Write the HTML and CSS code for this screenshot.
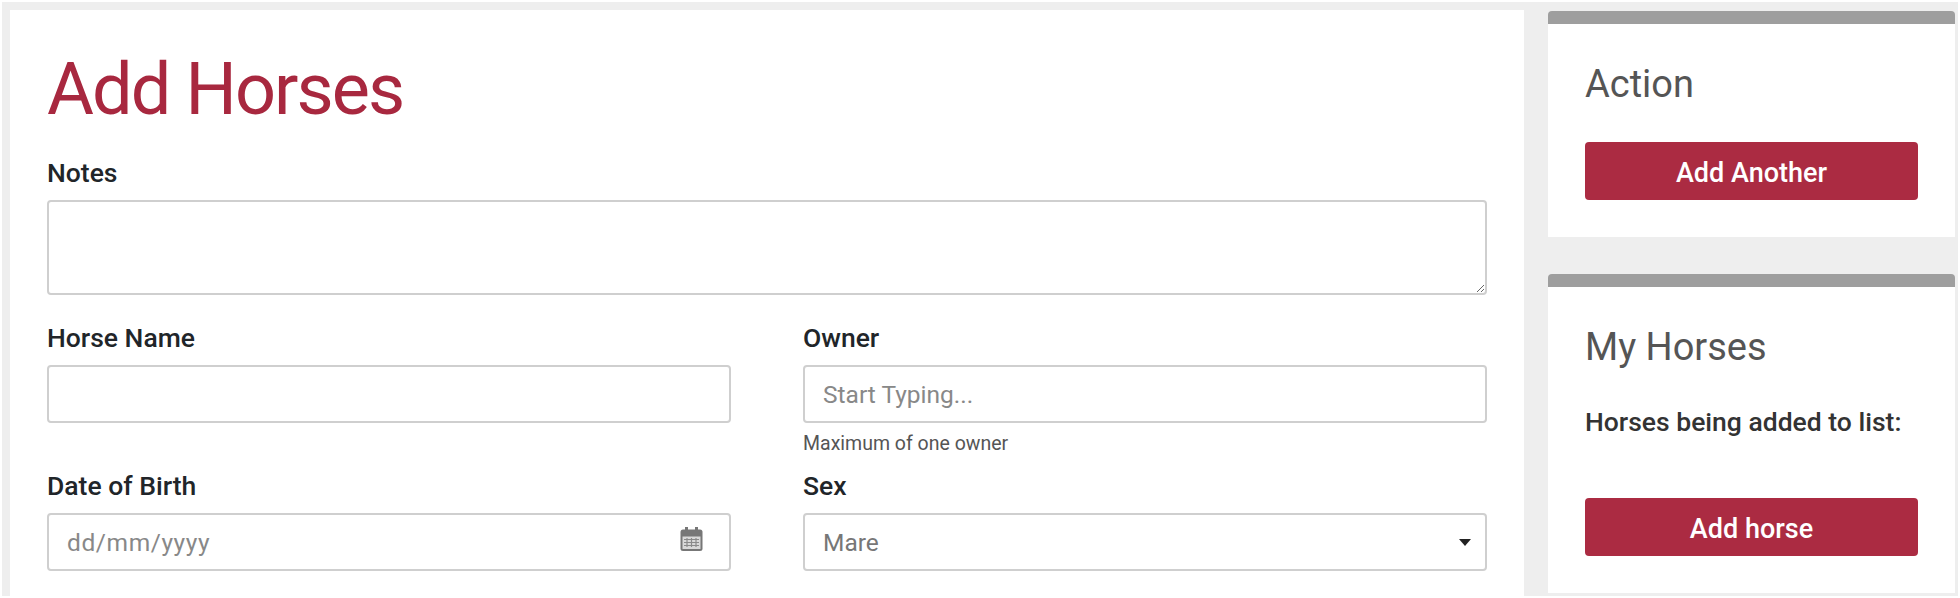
FILE: index.html
```html
<!DOCTYPE html>
<html lang="en">
<head>
<meta charset="utf-8">
<title>Add Horses</title>
<link rel="stylesheet" href="styles.css">
</head>
<body>
<div class="page">
  <main class="main-card">
    <h1 class="title">Add Horses</h1>
    <div class="field field-notes">
      <label class="label" for="notes">Notes</label>
      <textarea class="control textarea" id="notes"></textarea>
    </div>
    <div class="form-grid">
      <div class="field">
        <label class="label" for="name">Horse Name</label>
        <input class="control input" id="name" type="text">
      </div>
      <div class="field">
        <label class="label" for="owner">Owner</label>
        <input class="control input" id="owner" type="text" placeholder="Start Typing...">
        <small class="help">Maximum of one owner</small>
      </div>
      <div class="field">
        <label class="label" for="dob">Date of Birth</label>
        <div class="with-icon">
          <input class="control input input-date" id="dob" type="text" placeholder="dd/mm/yyyy">
          <svg class="cal-icon" viewBox="0 0 25 25" aria-hidden="true">
            <rect x="6" y="0" width="3" height="5" fill="#777"/>
            <rect x="16" y="0" width="3" height="5" fill="#777"/>
            <rect x="1.5" y="2.5" width="22" height="21.5" rx="2.5" fill="#777"/>
            <rect x="3.5" y="9.5" width="18" height="12.5" fill="#d8d8d8"/>
            <path d="M5 12.5h15M5 15.5h15M5 18.5h15M8 11v9M12.5 11v9M17 11v9" stroke="#8a8a8a" stroke-width="1.2" fill="none"/>
          </svg>
        </div>
      </div>
      <div class="field">
        <label class="label" for="sex">Sex</label>
        <div class="with-icon">
          <select class="control select" id="sex">
            <option>Mare</option>
            <option>Stallion</option>
            <option>Gelding</option>
          </select>
          <span class="caret"></span>
        </div>
      </div>
    </div>
  </main>
  <aside class="sidebar">
    <section class="side-card side-action">
      <h2 class="side-title">Action</h2>
      <button class="btn" type="button">Add Another</button>
    </section>
    <section class="side-card side-horses">
      <h2 class="side-title">My Horses</h2>
      <p class="side-text">Horses being added to list:</p>
      <button class="btn" type="button">Add horse</button>
    </section>
  </aside>
</div>
</body>
</html>
```
FILE: styles.css
```css
* { box-sizing: border-box; }
html, body { margin: 0; height: 598px; overflow: hidden; background: #fff; }
body { font-family: Roboto, "Liberation Sans", sans-serif; color: #212529; padding: 2px; }
.page {
  display: grid;
  grid-template-columns: 1514px 407px;
  column-gap: 24px;
  padding: 8px 3px 0 8px;
  height: 594px;
  align-items: start;
  background: #eeeeee;
}
.main-card {
  background: #fff;
  height: 586px;
  padding: 41px 37px 0 37px;
}
.title {
  margin: 0;
  font-weight: 400;
  font-size: 72px;
  line-height: 78px;
  letter-spacing: -1.9px;
  color: #a8283f;
}
.field { display: flex; flex-direction: column; min-width: 0; }
.field-notes { margin-top: 27px; }
.label { font-size: 26.5px; font-weight: 500; line-height: 34px; color: #212529; margin-bottom: 10px; }
.control {
  display: block;
  width: 100%;
  border: 2px solid #cfcfcf;
  border-radius: 4px;
  background: #fff;
  font-family: inherit;
  font-size: 24.5px;
  color: #777;
  outline: none;
}
.textarea { height: 95px; resize: vertical; padding: 8px 18px; }
.input { height: 58px; padding: 0 18px; }
.input::placeholder { color: #888; opacity: 1; }
.input-date::placeholder { letter-spacing: 0.6px; }
.form-grid {
  display: grid;
  grid-template-columns: 684px 684px;
  column-gap: 72px;
  row-gap: 15px;
  margin-top: 26px;
}
.help { font-size: 19.5px; line-height: 20px; color: #555; margin-top: 11px; }
.with-icon { position: relative; }
.cal-icon { position: absolute; right: 27px; top: 14px; width: 25px; height: 25px; }
.select { height: 58px; padding: 0 18px; appearance: none; -webkit-appearance: none; }
.caret {
  position: absolute;
  right: 16px;
  top: 26px;
  border-left: 6px solid transparent;
  border-right: 6px solid transparent;
  border-top: 7px solid #222;
}
.sidebar { display: flex; flex-direction: column; row-gap: 37px; margin-top: 1px; }
.side-card {
  background: #fff;
  border-top: 13px solid #9e9e9e;
  border-radius: 4px 4px 0 0;
  padding: 38px 37px 0;
}
.side-action { height: 226px; }
.side-horses { height: 319px; }
.side-title { margin: 0; font-size: 38px; line-height: 44px; font-weight: 400; color: #555; }
.side-text { margin: 38px 0 0; font-size: 26.5px; font-weight: 500; line-height: 30px; color: #333; }
.btn {
  display: block;
  width: 100%;
  height: 58px;
  margin-top: 36px;
  padding: 3px 0 0;
  border: 0;
  border-radius: 4px;
  background: #ab2b42;
  color: #fff;
  font-family: inherit;
  font-size: 27px;
  font-weight: 500;
}
.side-horses .btn { margin-top: 61px; }
```
